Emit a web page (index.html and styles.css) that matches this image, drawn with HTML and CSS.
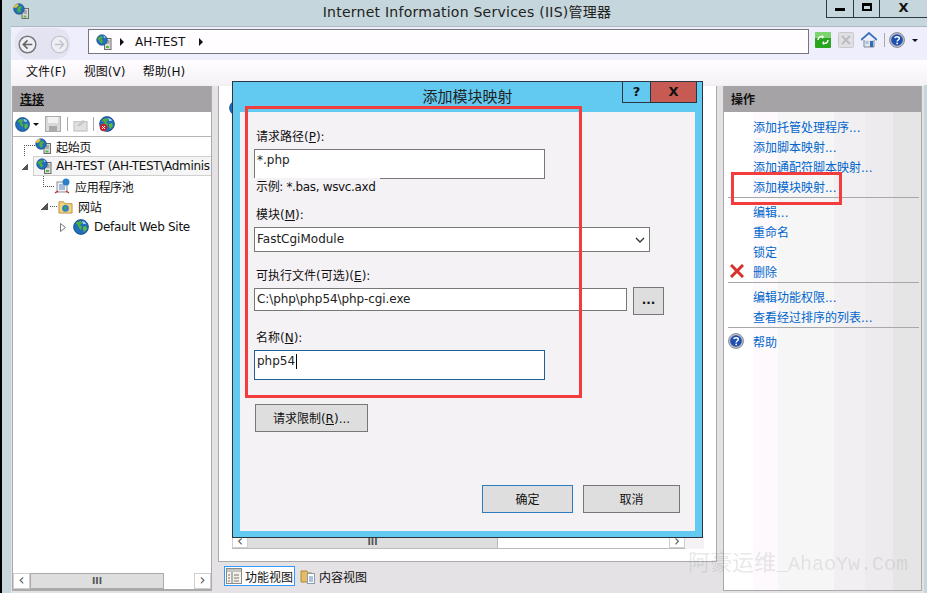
FILE: index.html
```html
<!DOCTYPE html>
<html lang="zh-CN">
<head>
    <meta charset="UTF-8">
    <title>Internet Information Services (IIS)管理器</title>
    <link rel="stylesheet" href="styles.css">
</head>
<body>
    <svg class="defs" width="0" height="0">
        <symbol id="globe" viewBox="0 0 16 16">
            <circle cx="8" cy="8" r="7.4" fill="#1f6fbd" stroke="#123f78" stroke-width=".8"/>
            <path d="M4 3l4-1 1 2-2 2 2 2-1 3-2-2-1-3-2-1z" fill="#4fae3c"/>
            <path d="M10 8l3-1 1 3-3 3-1-2z" fill="#5cb843"/>
            <path d="M9 2l3 1 1 2-3 0z" fill="#9fd0f2"/>
        </symbol>
        <symbol id="server" viewBox="0 0 16 16">
            <rect x="8.5" y="4.5" width="6.5" height="11" fill="#dcdcdc" stroke="#6d6d6d"/>
            <path d="M10 7h3.5M10 9h3.5" stroke="#777"/>
            <rect x="10" y="12" width="3" height="2" fill="#57b847"/>
            <circle cx="6" cy="6" r="5.3" fill="#1f6fbd" stroke="#123f78" stroke-width=".6"/>
            <path d="M3 3l3-1 1 2-2 1 2 2-1 3-2-2-1-2-2-1z" fill="#4fae3c"/>
            <path d="M7.500 1.500l2.500 2-2 .5z" fill="#9fd0f2"/>
        </symbol>
        <symbol id="home-server" viewBox="0 0 16 16">
            <rect x="9" y="5.500" width="6.500" height="10" fill="#dcdcdc" stroke="#6d6d6d"/>
            <path d="M10.500 8h3.500M10.500 10h3.500" stroke="#777"/>
            <rect x="10.500" y="12.500" width="3" height="2" fill="#57b847"/>
            <circle cx="6" cy="6" r="5.300" fill="#1f6fbd" stroke="#123f78" stroke-width=".6"/>
            <path d="M0 4l4-3 2 1-3 3z" fill="#f2c230"/>
            <path d="M5 4l3-1 1 2-2 1 1 2-2 2-2-3z" fill="#4fae3c"/>
        </symbol>
        <symbol id="help" viewBox="0 0 16 16">
            <circle cx="8" cy="8" r="7.500" fill="#b9bcc4" stroke="#7b7f88" stroke-width=".8"/>
            <circle cx="8" cy="8" r="5.800" fill="#1c4fb0"/>
            <path d="M5.800 6.200c.2-1.700 4.500-2 4.500.3 0 1.500-2.100 1.500-2.100 3" fill="none" stroke="#fff" stroke-width="1.500"/>
            <rect x="7.400" y="10.600" width="1.600" height="1.600" fill="#fff"/>
        </symbol>
    </svg>

    <div class="window">
        <header class="titlebar">
            <svg class="app-icon" width="16" height="16"><use href="#home-server"/></svg>
            <div class="title">Internet Information Services (IIS)管理器</div>
            <div class="win-btns">
                <span class="win-btn min"><i></i></span>
                <span class="win-btn max"><i></i></span>
                <span class="win-btn close">X</span>
            </div>
        </header>

        <div class="navbar">
            <div class="nav-pill">
                <svg width="19" height="19" viewBox="0 0 16 16"><circle cx="8" cy="8" r="7" fill="#eeeef4" stroke="#777" stroke-width="1.200"/><path d="M12 8H5M8 4.500L4.500 8 8 11.500" fill="none" stroke="#666" stroke-width="1.400"/></svg>
                <svg width="19" height="19" viewBox="0 0 16 16"><circle cx="8" cy="8" r="7" fill="#eeeef4" stroke="#c4c4cc" stroke-width="1.100"/><path d="M4 8h7M8 4.500L11.500 8 8 11.500" fill="none" stroke="#c4c4cc" stroke-width="1.200"/></svg>
            </div>
            <div class="address">
                <svg width="16" height="16"><use href="#server"/></svg>
                <span class="crumb-arrow"></span>
                <span class="crumb">AH-TEST</span>
                <span class="crumb-arrow"></span>
            </div>
            <div class="nav-tools">
                <svg width="16" height="16" viewBox="0 0 16 16"><rect width="16" height="16" rx="1" fill="#2aa520"/><rect width="16" height="6" fill="#7bd46f"/><path d="M3 8c0-3 3-4 5-3M13 8c0 3-3 4-5 3" fill="none" stroke="#fff" stroke-width="1.500"/><path d="M7 3l2 2-2 2zM9 9l-2 2 2 2z" fill="#fff"/></svg>
                <svg width="16" height="16" viewBox="0 0 16 16"><rect x=".5" y=".5" width="15" height="15" rx="1" fill="#e0e0e4" stroke="#c8c8cc"/><path d="M4 4l8 8M12 4l-8 8" stroke="#bcbcc0" stroke-width="2"/></svg>
                <svg width="16" height="16" viewBox="0 0 16 16"><path d="M3 8v7h10V8" fill="#e6e6ea" stroke="#7d8794"/><path d="M0 8l8-7 8 7" fill="none" stroke="#3c72ba" stroke-width="1.800"/><rect x="9" y="9" width="3" height="6" fill="#2e6cb5"/><rect x="4.500" y="9" width="3" height="3" fill="#9fc4e8"/></svg>
                <span class="tool-sep"></span>
                <svg width="16" height="16"><use href="#help"/></svg>
                <span class="drop-arrow"></span>
            </div>
        </div>

        <nav class="menubar">
            <span>文件(F)</span>
            <span>视图(V)</span>
            <span>帮助(H)</span>
        </nav>

        <main class="panes">
            <section class="pane-left">
                <h2 class="pane-head"><u>连接</u></h2>
                <div class="tree-tools">
                    <svg width="15" height="15"><use href="#globe"/></svg>
                    <span class="drop-arrow small"></span>
                    <svg class="save" width="16" height="16" viewBox="0 0 16 16"><rect x=".5" y=".5" width="15" height="15" fill="#d9d9d9" stroke="#aaa"/><rect x="3" y="1" width="10" height="6" fill="#f2f2f2"/><rect x="4" y="10" width="8" height="5" fill="#aaa"/></svg>
                    <span class="tool-sep"></span>
                    <svg width="15" height="15" viewBox="0 0 16 16"><rect x="1" y="5" width="14" height="10" fill="#e0e0e0" stroke="#bbb"/><path d="M4 9l7-6 2 2-6 5z" fill="#c9c9c9"/></svg>
                    <span class="tool-sep"></span>
                    <svg class="disconnect" width="16" height="16" viewBox="0 0 16 16"><use href="#globe"/><circle cx="4.500" cy="11.500" r="3.700" fill="#c8232c"/><path d="M3 10l3 3M6 10l-3 3" stroke="#fff"/></svg>
                </div>
                <ul class="tree">
                    <li class="node lvl-0"><span class="elbow-down"></span><svg width="16" height="16"><use href="#home-server"/></svg><span class="node-text">起始页</span></li>
                    <li class="node lvl-root">
                        <span class="twist open"></span>
                        <div class="sel-box"><svg width="16" height="16"><use href="#server"/></svg><span class="node-text">AH-TEST (AH-TEST\Adminis</span></div>
                    </li>
                    <li class="node lvl-1"><span class="elbow"></span><svg width="16" height="16" viewBox="0 0 16 16"><rect x="3" y="4" width="10" height="10" fill="#f2f2f2" stroke="#8a8f98"/><path d="M5 7h6M5 9h6M5 11h6" stroke="#5b87c4"/><circle cx="12" cy="4" r="3.500" fill="#2a7fc9"/><path d="M1 15l3-2M15 15l-3-2" stroke="#c8322c" stroke-width="1.500"/></svg><span class="node-text">应用程序池</span></li>
                    <li class="node lvl-2"><span class="twist open"></span><span class="stub"></span><svg width="15" height="15" viewBox="0 0 16 16"><path d="M1 3h5l1 2h8v10H1z" fill="#f2d27c" stroke="#b8934a"/><circle cx="8" cy="10" r="3.500" fill="#2a7fc9"/><path d="M6.500 9l2-1 1 2-2 2z" fill="#4fae3c"/></svg><span class="node-text">网站</span></li>
                    <li class="node lvl-3"><svg class="twist-closed" width="6" height="9" viewBox="0 0 6 9"><path d="M.5.500l5 4-5 4z" fill="#fff" stroke="#777"/></svg><svg width="16" height="16"><use href="#globe"/></svg><span class="node-text">Default Web Site</span></li>
                </ul>
                <div class="hscroll left-scroll">
                    <span class="sb-btn">&lsaquo;</span>
                    <span class="sb-thumb">III</span>
                    <span class="sb-track"></span>
                    <span class="sb-btn">&rsaquo;</span>
                </div>
            </section>

            <section class="pane-center">
                <div class="content">
                    <svg class="peek" width="16" height="16"><use href="#globe"/></svg>
                    <div class="content-foot">
                        <div class="hscroll inner-scroll">
                            <span class="sb-btn">&lsaquo;</span>
                            <span class="sb-thumb">III</span>
                            <span class="sb-track"></span>
                            <span class="sb-btn">&rsaquo;</span>
                        </div>
                    </div>
                </div>
                <div class="view-tabs">
                    <span class="view-tab active">
                        <svg width="16" height="16" viewBox="0 0 16 16"><rect x=".5" y=".5" width="15" height="15" fill="#f4f1e6" stroke="#8a8a8a"/><rect x="1" y="1" width="14" height="3" fill="#c5c5c5"/><path d="M6 4v11M8 7h5M8 10h5M8 13h5M2 7h2M2 10h2M2 13h2" stroke="#777"/></svg>
                        功能视图
                    </span>
                    <span class="view-tab">
                        <svg width="16" height="16" viewBox="0 0 16 16"><path d="M1 3h6l1 2h4v9H1z" fill="#e6bd62" stroke="#b08a3e"/><rect x="7.500" y="5.500" width="7" height="10" fill="#fff" stroke="#8a9ab0"/><path d="M9 9h4M9 11h4M9 13h4" stroke="#5b87c4"/></svg>
                        内容视图
                    </span>
                </div>
            </section>

            <aside class="pane-right">
                <h2 class="pane-head">操作</h2>
                <div class="actions">
                    <ul class="action-group">
                        <li><a>添加托管处理程序...</a></li>
                        <li><a>添加脚本映射...</a></li>
                        <li><a>添加通配符脚本映射...</a></li>
                        <li><a>添加模块映射...</a></li>
                    </ul>
                    <ul class="action-group">
                        <li><a>编辑...</a></li>
                        <li><a>重命名</a></li>
                        <li><a>锁定</a></li>
                        <li><svg class="action-icon icon-delete" width="14" height="14" viewBox="0 0 14 14"><path d="M1 1l12 12M13 1L1 13" stroke="#d8302c" stroke-width="3"/></svg><a>删除</a></li>
                    </ul>
                    <ul class="action-group">
                        <li><a>编辑功能权限...</a></li>
                        <li><a>查看经过排序的列表...</a></li>
                    </ul>
                    <ul class="action-group">
                        <li><svg class="action-icon" width="16" height="16"><use href="#help"/></svg><a>帮助</a></li>
                    </ul>
                </div>
            </aside>
        </main>
    </div>

    <div class="dialog">
        <div class="dialog-bar">
            <div class="dialog-title">添加模块映射</div>
            <div class="dialog-btns">
                <span class="dlg-btn help">?</span>
                <span class="dlg-btn close">X</span>
            </div>
        </div>
        <form class="dialog-body">
            <label class="field-label">请求路径(<u>P</u>):</label>
            <div class="field field-tall no-bottom">*.php</div>
            <div class="hint">示例: *.bas, wsvc.axd</div>

            <label class="field-label mt-9">模块(<u>M</u>):</label>
            <div class="field field-select">FastCgiModule
                <svg width="10" height="6" viewBox="0 0 10 6"><path d="M1 1l4 4 4-4" fill="none" stroke="#333" stroke-width="1.300"/></svg>
            </div>

            <label class="field-label mt-14">可执行文件(可选)(<u>E</u>):</label>
            <div class="path-row">
                <div class="field field-path">C:\php\php54\php-cgi.exe</div>
                <button type="button" class="btn btn-browse">...</button>
            </div>

            <label class="field-label mt-13">名称(<u>N</u>):</label>
            <div class="field field-tall focused">php54<span class="caret"></span></div>

            <button type="button" class="btn btn-limits">请求限制(<u>R</u>)...</button>

            <div class="dialog-foot">
                <button type="button" class="btn btn-ok">确定</button>
                <button type="button" class="btn btn-cancel">取消</button>
            </div>
        </form>
    </div>

    <div class="red-box box-form"></div>
    <div class="red-box box-action"></div>
    <div class="watermark"><span>阿豪运维</span>_AhaoYw.Com</div>
</body>
</html>
```

FILE: styles.css
```css
* {
    box-sizing: border-box;
}
body {
    margin: 0;
    width: 927px;
    height: 593px;
    overflow: hidden;
    position: relative;
    background: #c5d6dc;
    font-family: "DejaVu Sans", "Noto Sans CJK SC", sans-serif;
    font-size: 12px;
    color: #111;
}
ul {
    list-style: none;
    margin: 0;
    padding: 0;
}
svg {
    flex: none;
    display: block;
}
.defs {
    position: absolute;
}
.window {
    height: 593px;
    border-left: 2px solid #000;
    display: flex;
    flex-direction: column;
}

/* title bar */
.titlebar {
    height: 26px;
    flex: none;
    display: grid;
    grid-template-columns: 1fr auto 1fr;
    align-items: start;
    padding-left: 5px;
}
.app-icon {
    margin: 3px 0 0 6px;
}
.title {
    font-size: 14px;
    line-height: 24px;
    letter-spacing: .25px;
    color: #222;
}
.win-btns {
    justify-self: end;
    display: flex;
    height: 18px;
    border-bottom: 1px solid #2e3a40;
}
.win-btn {
    border-left: 1px solid #2e3a40;
    display: flex;
    justify-content: center;
    font-weight: bold;
    line-height: 15px;
}
.win-btn.min {
    width: 27px;
}
.win-btn.min i {
    width: 10px;
    height: 3px;
    background: #000;
    margin-top: 8px;
}
.win-btn.max {
    width: 26px;
}
.win-btn.max i {
    width: 10px;
    height: 8px;
    border: 2px solid #000;
    border-top-width: 3px;
    margin-top: 3px;
}
.win-btn.close {
    width: 48px;
    font-size: 13px;
}

/* nav bar */
.navbar {
    margin-left: 9px;
    height: 34px;
    flex: none;
    background: #eeeefc;
    border-top: 1px solid #aeb8bf;
    display: flex;
    align-items: flex-start;
}
.nav-pill {
    width: 55px;
    height: 31px;
    margin: 1px 0 0 4px;
    padding: 7px 1px 0 3px;
    border-radius: 14px;
    background: #e3e3f2;
    display: flex;
    justify-content: space-between;
}
.address {
    width: 721px;
    height: 25px;
    margin: 2px 0 0 18px;
    border: 1px solid #76767e;
    background: #fffdff;
    display: flex;
    align-items: center;
    padding-left: 7px;
}
.crumb {
    margin: 0 6px 0 11px;
}
.crumb-arrow {
    width: 0;
    height: 0;
    margin-left: 8px;
    border-left: 4px solid #111;
    border-top: 4px solid transparent;
    border-bottom: 4px solid transparent;
}
.nav-tools {
    display: flex;
    align-items: center;
    gap: 7px;
    margin: 5px 0 0 6px;
}
.tool-sep {
    width: 1px;
    height: 14px;
    background: #aaa;
}
.nav-tools .tool-sep {
    margin-right: -3px;
}
.drop-arrow {
    width: 0;
    height: 0;
    border-top: 3px solid #111;
    border-left: 3px solid transparent;
    border-right: 3px solid transparent;
}

/* menu */
.menubar {
    margin-left: 9px;
    height: 25px;
    flex: none;
    background: linear-gradient(#fffdff, #f4f2f4);
    display: flex;
    gap: 17.5px;
    padding-left: 15px;
    line-height: 24px;
    white-space: nowrap;
}

/* three panes */
.panes {
    margin-left: 9px;
    width: 913px;
    height: 508px;
    flex: none;
    background: #e5e2e6;
    border-top: 1px solid #f0eef0;
    display: flex;
    align-items: flex-start;
    padding-left: 1px;
    gap: 6px;
}
.pane-head {
    margin: 0;
    height: 26px;
    flex: none;
    background: #a5a3a5;
    font-size: 12px;
    font-weight: bold;
    line-height: 28px;
    padding-left: 7px;
    color: #111;
}
.pane-left {
    width: 200px;
    height: 505px;
    background: #fff;
    border: 1px solid #aaa;
    border-top: 0;
    border-bottom-width: 2px;
    display: flex;
    flex-direction: column;
}
.tree-tools {
    height: 25px;
    flex: none;
    border-bottom: 1px solid #b5b5b5;
    display: flex;
    align-items: center;
    padding-left: 2px;
}
.tree-tools .small {
    margin: 0 6px 0 3px;
}
.tree-tools .tool-sep {
    margin: 0 5px;
}
.tree-tools .save + .tool-sep {
    margin: 0 5px 0 6px;
}
.tree {
    flex: 1;
    margin-top: -1px;
    overflow: hidden;
}
.node {
    height: 20px;
    display: flex;
    align-items: center;
    white-space: nowrap;
}
.lvl-0 {
    padding-left: 11px;
}
.lvl-root {
    padding-left: 8px;
}
.sel-box {
    flex: 1;
    min-width: 0;
    height: 20px;
    margin-left: 5px;
    padding-left: 2px;
    background: #f5f5f5;
    border: 1px solid #d0d0d0;
    border-right: 0;
    display: flex;
    align-items: center;
    overflow: hidden;
}
.sel-box .node-text {
    margin-left: 4px;
}
.lvl-1 {
    padding-left: 30px;
}
.lvl-2 {
    padding-left: 28px;
}
.lvl-3 {
    padding-left: 47px;
    margin-top: 1px;
}
.node-text {
    margin-left: 5px;
    letter-spacing: -.3px;
}
.elbow-down {
    width: 11px;
    height: 11px;
    align-self: flex-end;
    border-top: 1px dotted #555;
    border-left: 1px dotted #555;
}
.elbow {
    width: 11px;
    height: 11px;
    align-self: flex-start;
    border-bottom: 1px dotted #555;
    border-left: 1px dotted #555;
}
.stub {
    width: 7px;
    margin: 0 1px 0 2px;
    border-bottom: 1px dotted #555;
}
.twist {
    width: 7px;
    height: 7px;
}
.twist.open {
    background: linear-gradient(135deg, transparent 50%, #555 50%);
}
.twist-closed {
    margin-right: 7px;
}
.hscroll {
    display: flex;
    height: 16px;
    flex: none;
    background: #fff;
}
.sb-btn {
    width: 17px;
    flex: none;
    border: 1px solid #cfcfcf;
    text-align: center;
    font-size: 15px;
    line-height: 12px;
    color: #555;
}
.sb-thumb {
    background: #dedede;
    border: 1px solid #aaa;
    text-align: center;
    font-size: 9px;
    font-weight: bold;
    line-height: 14px;
    color: #555;
}
.sb-track {
    flex: 1;
}
.left-scroll .sb-thumb {
    width: 134px;
}
.pane-center {
    width: 499px;
    display: flex;
    flex-direction: column;
}
.content {
    height: 476px;
    flex: none;
    background: #fff;
    border: 1px solid #aaa;
    border-top: 0;
    display: flex;
    flex-direction: column;
    padding-top: 14px;
}
.peek {
    margin-left: 10px;
}
.content-foot {
    margin: auto 12px 12px 13px;
    background: #f5f2f6;
    padding-right: 19px;
}
.inner-scroll {
    height: 12px;
    border-bottom: 1px solid #bbb;
}
.inner-scroll .sb-btn {
    width: 16px;
    line-height: 6px;
}
.inner-scroll .sb-thumb {
    width: 250px;
    line-height: 10px;
    border: 0;
    border-right: 1px solid #bbb;
}
.view-tabs {
    display: flex;
    gap: 3px;
    padding: 4px 0 0 6px;
}
.view-tab {
    height: 20px;
    display: flex;
    align-items: center;
    gap: 3px;
    padding: 0 1px;
    border: 1px solid transparent;
}
.view-tab.active {
    background: #fff;
    border-color: #3399ff;
}
.pane-right {
    width: 199px;
    height: 505px;
    border: 1px solid #aaa;
    border-top: 0;
    display: flex;
    flex-direction: column;
}
.actions {
    flex: 1;
    padding: 4px 2px 0 4px;
    background: linear-gradient(90deg, #fff 0 29px, #fdf9fc 29px 54px, #f7f6f7 54px 110px, #f2eff2 110px 141px, #eeebee 141px 169px, #e6e5e6 169px);
}
.action-group {
    border-bottom: 1px solid #a8a8a8;
    padding-bottom: 1px;
    margin-bottom: 3px;
}
.action-group:last-child {
    border: 0;
}
.action-group li {
    height: 20px;
    display: flex;
    align-items: center;
    padding-left: 25px;
    color: #0066cc;
}
.action-icon {
    margin-left: -25px;
    margin-right: 9px;
}
.icon-delete {
    margin-left: -23px;
}

/* dialog */
.dialog {
    position: absolute;
    left: 232px;
    top: 81px;
    width: 471px;
    height: 457px;
    border: 1px solid #2b3640;
    background: #62caf0;
    padding: 0 7px 6px 7px;
    display: flex;
    flex-direction: column;
}
.dialog-bar {
    height: 30px;
    flex: none;
    position: relative;
}
.dialog-title {
    text-align: center;
    font-size: 15px;
    line-height: 30px;
    color: #222;
}
.dialog-btns {
    position: absolute;
    right: -2px;
    top: 0;
    display: flex;
    height: 21px;
    border: 1px solid #2b3640;
    border-top: 0;
}
.dlg-btn {
    text-align: center;
    font-size: 13px;
    font-weight: bold;
    line-height: 20px;
}
.dlg-btn.help {
    width: 28px;
    border-right: 1px solid #2b3640;
}
.dlg-btn.close {
    width: 45px;
    background: #c75a52;
}
.dialog-body {
    flex: 1;
    background: #f5f2f6;
    padding: 15px 0 0 14px;
    display: flex;
    flex-direction: column;
    align-items: flex-start;
}
.field-label {
    height: 20px;
    line-height: 20px;
    margin: 0 0 2px 2px;
}
.mt-9 {
    margin-top: 9px;
}
.mt-13 {
    margin-top: 13px;
}
.mt-14 {
    margin-top: 14px;
}
.field {
    background: #fff;
    border: 1px solid #777;
    padding-left: 2px;
    font-size: 12px;
    color: #222;
}
.field-tall {
    width: 291px;
    height: 30px;
}
.no-bottom {
    line-height: 20px;
}
.focused {
    border-color: #1c6194;
    padding-top: 3px;
    line-height: 15px;
    display: flex;
    align-items: flex-start;
}
.caret {
    width: 1px;
    height: 15px;
    background: #000;
    margin-left: 1px;
}
.hint {
    margin-top: -1px;
    height: 18px;
    width: 126px;
    line-height: 18px;
    padding-left: 2px;
    letter-spacing: -.35px;
    background: #f5f2f6;
    white-space: nowrap;
    position: relative;
}
.field-select {
    width: 396px;
    height: 25px;
    line-height: 23px;
    display: flex;
    justify-content: space-between;
    align-items: center;
    padding-right: 4px;
}
.path-row {
    display: flex;
    gap: 6px;
    align-items: flex-start;
    margin-top: -1px;
}
.field-path {
    width: 373px;
    height: 23px;
    margin-top: 1px;
    line-height: 21px;
    letter-spacing: -.08px;
}
.btn {
    background: #dedede;
    border: 1px solid #777;
    font-family: inherit;
    font-size: 12px;
    color: #111;
    padding: 0 0 2px;
}
.btn-browse {
    width: 31px;
    height: 28px;
    font-weight: bold;
}
.btn-limits {
    width: 113px;
    height: 28px;
    margin: 24px 0 0 1px;
}
.dialog-foot {
    display: flex;
    gap: 10px;
    margin: 53px 0 0 228px;
}
.btn-ok {
    width: 91px;
    height: 28px;
    border-color: #2b7cbf;
}
.btn-cancel {
    width: 97px;
    height: 28px;
}

/* annotations on top of the screenshot */
.red-box {
    position: absolute;
    border: 3px solid #f33c3c;
}
.box-form {
    left: 245px;
    top: 106px;
    width: 337px;
    height: 292px;
}
.box-action {
    left: 731px;
    top: 172px;
    width: 111px;
    height: 33px;
}
.watermark {
    position: absolute;
    left: 688px;
    top: 552px;
    font-family: "Liberation Mono", "Noto Sans CJK SC", monospace;
    font-size: 20px;
    line-height: 26px;
    color: rgba(120, 120, 120, .18);
    white-space: nowrap;
}
.watermark span {
    font-size: 22px;
}
```
